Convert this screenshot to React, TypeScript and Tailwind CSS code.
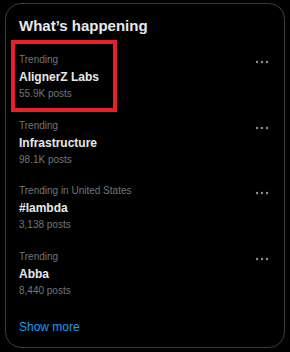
import React from "react";

const trends = [
  { ctx: "Trending", name: "AlignerZ Labs", posts: "55.9K posts" },
  { ctx: "Trending", name: "Infrastructure", posts: "98.1K posts" },
  { ctx: "Trending in United States", name: "#lambda", posts: "3,138 posts" },
  { ctx: "Trending", name: "Abba", posts: "8,440 posts" },
];

function Dots() {
  return (
    <svg width="14" height="4" viewBox="0 0 14 4" className="block">
      <circle cx="2" cy="2" r="1.2" fill="#8b9096" />
      <circle cx="7" cy="2" r="1.2" fill="#8b9096" />
      <circle cx="12" cy="2" r="1.2" fill="#8b9096" />
    </svg>
  );
}

export default function App() {
  return (
    <div
      className="w-[290px] h-[352px] bg-black pl-[5px] pt-[3px] overflow-hidden"
      style={{ fontFamily: '"Liberation Sans", Arial, sans-serif' }}
    >
      <div className="relative w-[280px] h-[345px] border border-[#3a3d40] rounded-[16px] px-[13px]">
        <div className="pt-[12px] h-[39px] text-[15px] leading-[20px] font-bold text-[#e7e9ea]">
          What’s happening
        </div>
        <div className="flex flex-col">
          {trends.map((t, i) => (
            <div key={i} className="relative pt-[10px] h-[65.7px]">
              <div className="text-[10px] leading-[14px] text-[#71767b]">{t.ctx}</div>
              <div className="mt-[2px] text-[12px] leading-[16px] font-bold text-[#e7e9ea]">{t.name}</div>
              <div className="mt-[2px] text-[10px] leading-[14px] text-[#71767b]">{t.posts}</div>
              <div className="absolute right-[2px] top-[17px]">
                <Dots />
              </div>
            </div>
          ))}
        </div>
        <div className="mt-[13px] text-[12px] leading-[16px] text-[#1d9bf0]">Show more</div>
        <div className="absolute left-[5px] top-[36px] w-[106px] h-[72px] border-[4px] border-[#e8202a]" />
      </div>
    </div>
  );
}
